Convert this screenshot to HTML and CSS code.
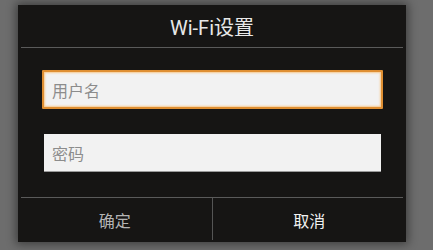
FILE: index.html
```html
<!DOCTYPE html>
<html lang="zh-CN">
<head>
<meta charset="utf-8">
<title>Wi-Fi设置</title>
<link rel="stylesheet" href="styles.css">
</head>
<body>
<div class="dialog">
  <div class="title">Wi-Fi设置</div>
  <div class="sep"></div>
  <div class="content">
    <div class="field focused"><span class="ph">用户名</span></div>
    <div class="field"><span class="ph">密码</span></div>
  </div>
  <div class="sep"></div>
  <div class="buttons">
    <div class="btn ok">确定</div>
    <div class="vdiv"></div>
    <div class="btn cancel">取消</div>
  </div>
</div>
</body>
</html>
```
FILE: styles.css
```css
html, body {
  margin: 0;
  padding: 0;
}
body {
  background: #6d6d6d;
  width: 433px;
  height: 250px;
  overflow: hidden;
  font-family: "Roboto", "Noto Sans CJK SC", sans-serif;
}
.dialog {
  margin: 5px 0 0 18px;
  width: 388px;
  height: 237px;
  background: #161514;
  box-shadow: 0 0 9px 2px rgba(0, 0, 0, 0.45);
  display: flex;
  flex-direction: column;
}
.title {
  height: 42px;
  display: flex;
  align-items: center;
  justify-content: center;
  color: #e8e8e8;
  font-size: 20px;
  padding-top: 1px;
  box-sizing: border-box;
}
.sep {
  height: 1px;
  margin: 0 3px;
  background: #5a5a5a;
}
.content {
  padding: 22px 0 25px;
  display: flex;
  flex-direction: column;
  gap: 25px;
}
.field {
  margin: 0 25px 0 26px;
  height: 38px;
  background: #f2f2f2;
  border-bottom: 1px solid #9a9a9a;
  box-sizing: border-box;
  display: flex;
  align-items: center;
  padding-left: 8px;
}
.field.focused {
  margin: 0 23px 0 24px;
  height: 39px;
  border: 2px solid #df8f33;
  box-shadow: inset 0 0 2px 1px #f7c98f;
  padding-left: 8px;
  border-radius: 1px;
}
.ph {
  color: #8c8c8c;
  font-size: 16px;
  font-family: "Noto Sans CJK SC", sans-serif;
}
.buttons {
  height: 44px;
  display: flex;
}
.btn {
  flex: 1;
  display: flex;
  align-items: center;
  justify-content: center;
  font-size: 16px;
  font-family: "Noto Sans CJK SC", sans-serif;
}
.ok {
  color: #b4b4b4;
}
.cancel {
  color: #f2f2f2;
}
.vdiv {
  width: 1px;
  height: 42px;
  background: #555;
}
```
